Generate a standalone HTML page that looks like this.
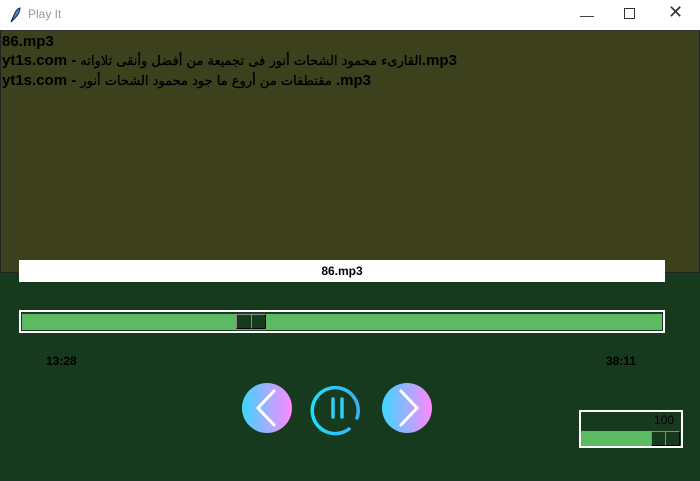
<!DOCTYPE html>
<html><head><style>
body{margin:0;width:700px;height:481px;overflow:hidden;font-family:"Liberation Sans","Noto Sans CJK SC",sans-serif;background:#173a1e;position:relative}
.abs{position:absolute}
.ar{font-family:"DejaVu Sans",sans-serif;font-weight:normal;font-size:13px;-webkit-text-stroke:0.3px #000}
</style></head><body>
<div class="abs" style="left:0;top:0;width:700px;height:30px;background:#fff"></div>
<svg class="abs" style="left:8px;top:6px" width="14" height="18"><path d="M3 16 L6 9 Q9 2 12 2 Q12 7 7 12 Z" fill="#4a8ad8" stroke="#123" stroke-width="1"/></svg>
<div class="abs" style="left:28px;top:7px;font-size:12px;color:#999">Play It</div>
<div class="abs" style="left:580px;top:7px;font-size:14px;color:#333">&#8212;</div>
<div class="abs" style="left:624px;top:8px;width:9px;height:9px;border:1px solid #333"></div>
<div class="abs" style="left:668px;top:2px;font-size:18px;color:#333">&#10005;</div>
<div class="abs" style="left:0;top:30px;width:698px;height:241px;background:#3c401d;border:1px solid #222;border-top:1px solid #333"></div>
<div class="abs" style="left:2px;top:32px;font-size:15px;font-weight:bold;line-height:19px;color:#000;white-space:nowrap">86.mp3<br>yt1s.com - <span class="ar">القارىء محمود الشحات أنور فى تجميعة من أفضل وأنقى تلاواته</span>.mp3<br>yt1s.com - <span class="ar">مقتطفات من أروع ما جود محمود الشحات أنور</span> .mp3</div>
<div class="abs" style="left:19px;top:260px;width:646px;height:22px;background:#fff;font-size:12px;font-weight:bold;text-align:center;line-height:22px">86.mp3</div>
<div class="abs" style="left:19px;top:310px;width:642px;height:19px;border:2px solid #fff"></div>
<div class="abs" style="left:22px;top:313px;width:640px;height:16px;background:#5cba62;border-top:1px solid #333"></div>
<div class="abs" style="left:236px;top:314px;width:14px;height:13px;background:#173a1e;border:1px solid #000;border-left-color:#888;border-top-color:#888"></div>
<div class="abs" style="left:251px;top:314px;width:13px;height:13px;background:#173a1e;border:1px solid #000;border-left-color:#888;border-top-color:#888"></div>
<div class="abs" style="left:46px;top:354px;font-size:12px;font-weight:bold">13:28</div>
<div class="abs" style="left:606px;top:354px;font-size:12px;font-weight:bold">38:11</div>
<svg class="abs" style="left:0;top:0" width="700" height="481">
<defs><linearGradient id="g" x1="0" x2="1"><stop offset="0" stop-color="#3dd6ff"/><stop offset="1" stop-color="#ff88ff"/></linearGradient>
<linearGradient id="c" x1="0" x2="1"><stop offset="0" stop-color="#19e0ff"/><stop offset="1" stop-color="#3ab0f0"/></linearGradient></defs>
<circle cx="267" cy="408" r="25" fill="url(#g)"/>
<path d="M274 391 L258 408 L274 425" fill="none" stroke="#fff" stroke-width="3" stroke-linecap="round"/>
<circle cx="407" cy="408" r="25" fill="url(#g)"/>
<path d="M401 391 L417 408 L401 425" fill="none" stroke="#fff" stroke-width="3" stroke-linecap="round"/>
<path d="M357 418 A23 23 0 1 0 349 429" fill="none" stroke="url(#c)" stroke-width="3.5" stroke-linecap="round"/>
<path d="M333 399 V417 M342 399 V417" stroke="#2ad0f5" stroke-width="3.5" stroke-linecap="round"/>
</svg>
<div class="abs" style="left:579px;top:410px;width:100px;height:34px;border:2px solid #fff"></div>
<div class="abs" style="left:654px;top:413px;font-size:12px;color:#000">100</div>
<div class="abs" style="left:581px;top:431px;width:70px;height:15px;background:#5cba62"></div>
<div class="abs" style="left:651px;top:431px;width:13px;height:13px;background:#173a1e;border:1px solid #000;border-left-color:#888;border-top-color:#888"></div>
<div class="abs" style="left:665px;top:431px;width:13px;height:13px;background:#173a1e;border:1px solid #000;border-left-color:#888;border-top-color:#888"></div>
</body></html>
